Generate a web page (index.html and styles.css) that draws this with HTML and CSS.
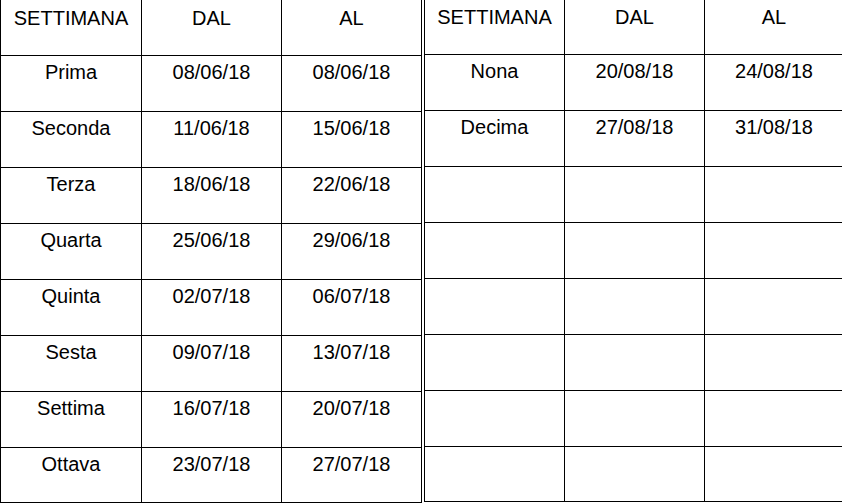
FILE: index.html
```html
<!DOCTYPE html>
<html lang="it">
<head>
<meta charset="utf-8">
<title>Settimane</title>
<link rel="stylesheet" href="styles.css">
</head>
<body>
<div class="page">
  <div class="tbl tbl-left">
    <div class="c h">SETTIMANA</div><div class="c h">DAL</div><div class="c h">AL</div>
    <div class="c">Prima</div><div class="c">08/06/18</div><div class="c">08/06/18</div>
    <div class="c">Seconda</div><div class="c">11/06/18</div><div class="c">15/06/18</div>
    <div class="c">Terza</div><div class="c">18/06/18</div><div class="c">22/06/18</div>
    <div class="c">Quarta</div><div class="c">25/06/18</div><div class="c">29/06/18</div>
    <div class="c">Quinta</div><div class="c">02/07/18</div><div class="c">06/07/18</div>
    <div class="c">Sesta</div><div class="c">09/07/18</div><div class="c">13/07/18</div>
    <div class="c">Settima</div><div class="c">16/07/18</div><div class="c">20/07/18</div>
    <div class="c">Ottava</div><div class="c">23/07/18</div><div class="c">27/07/18</div>
  </div>
  <div class="tbl tbl-right">
    <div class="c h">SETTIMANA</div><div class="c h">DAL</div><div class="c h last">AL</div>
    <div class="c">Nona</div><div class="c">20/08/18</div><div class="c last">24/08/18</div>
    <div class="c">Decima</div><div class="c">27/08/18</div><div class="c last">31/08/18</div>
    <div class="c"></div><div class="c"></div><div class="c last"></div>
    <div class="c"></div><div class="c"></div><div class="c last"></div>
    <div class="c"></div><div class="c"></div><div class="c last"></div>
    <div class="c"></div><div class="c"></div><div class="c last"></div>
    <div class="c"></div><div class="c"></div><div class="c last"></div>
    <div class="c"></div><div class="c"></div><div class="c last"></div>
  </div>
</div>
</body>
</html>
```

FILE: styles.css
```css
html, body {
  margin: 0;
  padding: 0;
  background: #fff;
}

body {
  font-family: "Liberation Sans", Arial, sans-serif;
  font-size: 20px;
  color: #000;
  overflow: hidden;
}

.page {
  display: flex;
  align-items: flex-start;
  width: 842px;
  height: 503px;
}

.tbl {
  display: grid;
  border-left: 1px solid #000;
}

.tbl-left {
  grid-template-columns: 141px 140px 140px;
  grid-template-rows: 56px repeat(7, 56px) 55px;
}

.tbl-right {
  margin-left: 2px;
  grid-template-columns: 140px 140px 138px;
  grid-template-rows: 55px repeat(7, 56px) 55px;
}

.c {
  box-sizing: border-box;
  border-right: 1px solid #000;
  border-bottom: 1px solid #000;
  text-align: center;
  line-height: 23px;
  padding-top: 5px;
  white-space: nowrap;
}

.c.h {
  padding-top: 7px;
}

.tbl-right .c.h {
  padding-top: 6px;
}

.c.last {
  border-right: none;
}
```
